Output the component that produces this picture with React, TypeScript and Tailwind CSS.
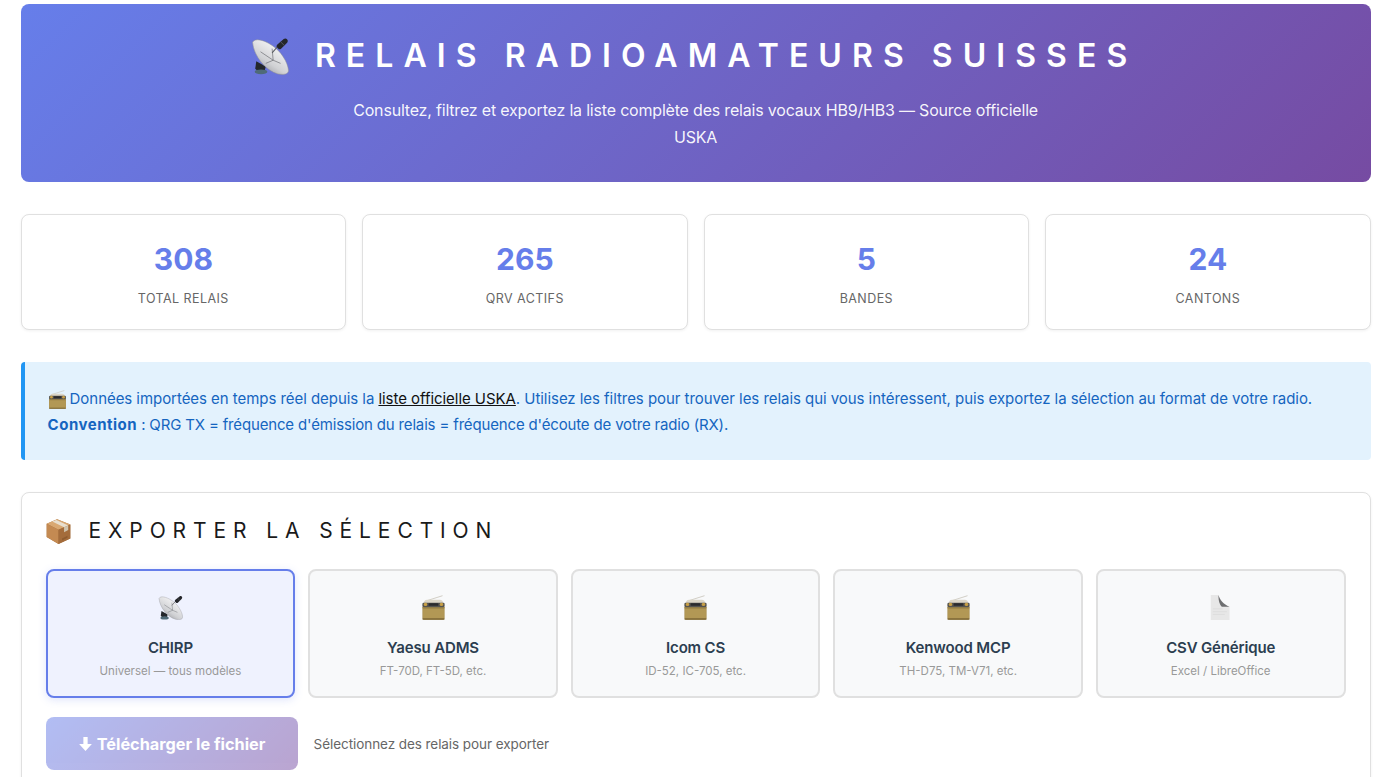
import { useId } from "react";

function Dish({ size }: { size: number }) {
  const id = useId();
  return (
    <svg width={size} height={size} viewBox="0 0 36 36" aria-hidden="true">
      <defs>
        <linearGradient id={id} x1="0.7" y1="0.2" x2="0.2" y2="0.9">
          <stop offset="0" stopColor="#f2f2f3" />
          <stop offset="0.6" stopColor="#d0d1d4" />
          <stop offset="1" stopColor="#9c9da1" />
        </linearGradient>
      </defs>
      <path d="M5 23l-1 7 3 3 6-1 1-4z" fill="#23262b" />
      <ellipse cx="9.500" cy="33" rx="6" ry="2.300" fill="#4f6a78" />
      <path d="M1.500 5C3.500 .8 12 2.500 20 8c8 5 15 16 15.500 23.500.2 4-5 4.500-10 3.500C14 32 2.500 18 1.500 5z" fill={`url(#${id})`} stroke="#8f9095" strokeWidth="0.5" />
      <path d="M9 14l12 8M20 11l1 11M14 25l7-3M28 25l-7-3" stroke="#63656a" strokeWidth="0.6" fill="none" />
      <path d="M20 15l7-8" stroke="#5b5d62" strokeWidth="1" />
      <path d="M25 7l6-5c1-.8 2.500-.6 3.300.3s.7 2.500-.3 3.300l-5.500 5.500c-1 .8-2 .6-2.800-.3l-1-1c-.7-.8-.6-2 .3-2.800z" fill="#24262a" />
      <path d="M28 4.500l3.500 3.500" stroke="#666a70" strokeWidth="0.7" />
    </svg>
  );
}

function Radio({ size }: { size: number }) {
  return (
    <svg width={size} height={size} viewBox="0 0 36 36" aria-hidden="true">
      <path d="M6 9L31 1" stroke="#c9c5ba" strokeWidth="1.200" />
      <path d="M4 12c0-3 2-5 5-5h18c3 0 5 2 5 5z" fill="#dcd6c7" />
      <rect x="2" y="15" width="32" height="20.500" rx="2.500" fill="#a98f50" />
      <rect x="2" y="11" width="32" height="6.500" rx="2" fill="#56544f" />
      <circle cx="6.500" cy="13.500" r="2.500" fill="#c9a045" />
      <circle cx="29.500" cy="13.500" r="2.500" fill="#c9a045" />
      <rect x="11" y="12" width="14" height="3.500" rx="0.500" fill="#2b2b2e" />
      <path d="M2 18.500h32" stroke="#8c7538" strokeWidth="0.8" />
      <rect x="3" y="20" width="30" height="13" rx="1" fill="#b29855" />
      <rect x="2" y="33.500" width="32" height="2" rx="1" fill="#806b37" />
    </svg>
  );
}

function Box({ size }: { size: number }) {
  return (
    <svg width={size} height={size} viewBox="0 0 36 36" aria-hidden="true">
      <path d="M16 .5L35 8v20L18 36 1 26V7z" fill="#a56f3e" />
      <path d="M16 .5L35 8 18 15.500 1 7z" fill="#d9a872" />
      <path d="M1 7l17 8.500V36L1 26z" fill="#c48a52" />
      <path d="M18 15.500L35 8v20L18 36z" fill="#a46c3b" />
      <path d="M9 3.500L26 12l6-2.800L15 1.500z" fill="#e8dfcf" />
      <path d="M26 12v7l6-3V9.200z" fill="#cfc3ad" />
      <path d="M23 28l8-4v3l-8 4z" fill="#8f5c30" />
    </svg>
  );
}

function Page({ size }: { size: number }) {
  return (
    <svg width={size} height={size} viewBox="0 0 36 36" aria-hidden="true">
      <path d="M4 0h11c2 6 7 13 16 17v19H4z" fill="#e7e7e7" />
      <path d="M15 0c2 7 7 13 16 17H20c-3-3-5-8-5-17z" fill="#6d6e70" />
      <path d="M7 20h14M7 24h20M7 28h17" stroke="#d6d6d6" strokeWidth="0.800" />
    </svg>
  );
}

const stats = [
  ["308", "TOTAL RELAIS"],
  ["265", "QRV ACTIFS"],
  ["5", "BANDES"],
  ["24", "CANTONS"],
];

const formats = [
  { Icon: Dish, name: "CHIRP", sub: "Universel — tous modèles", active: true },
  { Icon: Radio, name: "Yaesu ADMS", sub: "FT-70D, FT-5D, etc.", active: false },
  { Icon: Radio, name: "Icom CS", sub: "ID-52, IC-705, etc.", active: false },
  { Icon: Radio, name: "Kenwood MCP", sub: "TH-D75, TM-V71, etc.", active: false },
  { Icon: Page, name: "CSV Générique", sub: "Excel / LibreOffice", active: false },
];

export default function App() {
  return (
    <div className="h-[777px] overflow-hidden bg-white font-['Inter',sans-serif] text-[#222]">
      <div className="ml-[20.600px] w-[1350px] pt-1">
        <header className="flex h-[178px] flex-col items-center rounded-lg bg-[linear-gradient(135deg,#667eea_0%,#764ba2_100%)] pt-[28px] text-white">
          <h1 className="mr-[3px] flex h-[46px] translate-y-[1px] items-center gap-[26px] text-[32px] font-semibold tracking-[10.050px]">
            <Dish size={38} />
            <span>RELAIS RADIOAMATEURS SUISSES</span>
          </h1>
          <p className="mt-[19px] w-[700px] text-center text-[16px] leading-[27px] tracking-[-0.012em] text-white/95">
            Consultez, filtrez et exportez la liste complète des relais vocaux HB9/HB3 — Source officielle USKA
          </p>
        </header>

        <section className="mt-8 grid grid-cols-4 gap-4">
          {stats.map(([value, label]) => (
            <div key={label} className="flex h-[116px] flex-col items-center rounded-lg border border-[#e0e0e0] bg-white pt-[24px] shadow-[0_1px_3px_rgba(0,0,0,0.06)]">
              <div className="text-[30px] leading-[40px] font-bold text-[#667eea]">{value}</div>
              <div className="mt-[11px] text-[12.500px] leading-[18px] tracking-[0.035em] text-[#666]">{label}</div>
            </div>
          ))}
        </section>

        <section className="mt-8 h-[98px] rounded border-l-4 border-[#2196f3] bg-[#e3f2fd] px-[23px] pt-[24px] text-[15px] leading-[26px] text-[#1565c0]">
          <p className="flex items-center gap-[3px] tracking-[-0.05px]">
            <Radio size={19} />
            <span>
              Données importées en temps réel depuis la <span className="text-[#111] underline">liste officielle USKA</span>. Utilisez les filtres pour trouver les relais qui vous intéressent, puis exportez la sélection au format de votre radio.
            </span>
          </p>
          <p className="tracking-[-0.16px]">
            <strong className="font-bold tracking-[0.5px]">Convention</strong> : QRG TX = fréquence d'émission du relais = fréquence d'écoute de votre radio (RX).
          </p>
        </section>

        <section className="mt-8 h-[400px] rounded-lg border border-[#e0e0e0] bg-white px-6 pt-[24px] shadow-[0_1px_3px_rgba(0,0,0,0.06)]">
          <h2 className="flex h-[28px] items-center gap-[18px] text-[21px] font-normal tracking-[6.900px] text-[#1a1a1a]">
            <Box size={25} />
            <span>EXPORTER LA SÉLECTION</span>
          </h2>
          <div className="mt-[24px] grid grid-cols-5 gap-[12.800px]">
            {formats.map(({ Icon, name, sub, active }) => (
              <div
                key={name}
                className={
                  active
                    ? "flex h-[129px] flex-col items-center rounded-lg border-2 border-[#667eea] bg-[#eff2fe] pt-[24px] shadow-[0_2px_8px_rgba(102,126,234,0.2)]"
                    : "flex h-[129px] flex-col items-center rounded-lg border-2 border-[#e0e0e0] bg-[#f8f9fa] pt-[24px]"
                }
              >
                <Icon size={25} />
                <div className="mt-[17px] text-[15px] leading-[22px] font-semibold tracking-[-0.01em] text-[#2c3e50]">{name}</div>
                <div className="mt-[3px] text-[11.500px] leading-[18px] text-[#999]">{sub}</div>
              </div>
            ))}
          </div>
          <div className="mt-[19px] flex items-center gap-4">
            <button className="flex h-[53px] w-[252px] items-center justify-center gap-[4px] rounded-lg bg-[linear-gradient(135deg,#667eea_0%,#764ba2_100%)] pt-[1px] text-[16.300px] font-bold text-white opacity-50">
              <svg width="15" height="16" viewBox="0 0 14 15" aria-hidden="true">
                <path d="M5 1h4v6.500h4L7 14 1 7.500h4z" fill="currentColor" />
              </svg>
              <span>Télécharger le fichier</span>
            </button>
            <span className="mt-[2px] text-[13.500px] tracking-[-0.005em] text-[#666]">Sélectionnez des relais pour exporter</span>
          </div>
        </section>
      </div>
    </div>
  );
}
